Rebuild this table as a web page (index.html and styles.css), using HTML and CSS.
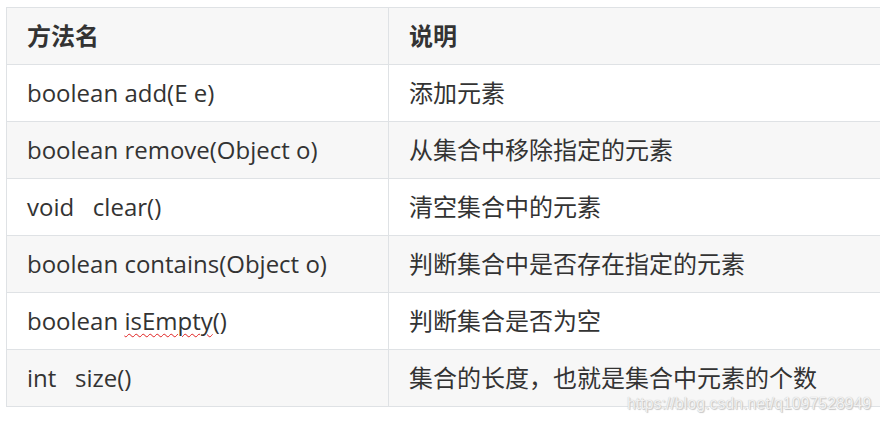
FILE: index.html
```html
<!DOCTYPE html>
<html lang="zh">
<head>
<meta charset="utf-8">
<link rel="stylesheet" href="styles.css">
</head>
<body>
<div class="page">
  <table class="methods">
    <thead>
      <tr><th class="col-name">方法名</th><th class="col-desc">说明</th></tr>
    </thead>
    <tbody>
      <tr><td>boolean add(E e)</td><td>添加元素</td></tr>
      <tr><td>boolean remove(Object o)</td><td>从集合中移除指定的元素</td></tr>
      <tr><td class="pre">void   clear()</td><td>清空集合中的元素</td></tr>
      <tr><td>boolean contains(Object o)</td><td>判断集合中是否存在指定的元素</td></tr>
      <tr><td>boolean <span class="spell">isEmpty</span>()</td><td>判断集合是否为空</td></tr>
      <tr><td class="pre">int   size()</td><td>集合的长度，也就是集合中元素的个数</td></tr>
    </tbody>
  </table>
  <div class="watermark">https://blog.csdn.net/q1097528949</div>
</div>
</body>
</html>
```
FILE: styles.css
```css
html, body {
  margin: 0;
  padding: 0;
  background: #ffffff;
  overflow: hidden;
}
.page {
  position: relative;
  width: 880px;
  height: 424px;
  padding: 7px 0 0 6px;
  box-sizing: border-box;
}
.methods {
  border-collapse: collapse;
  font-family: "Open Sans", "Noto Sans CJK SC", sans-serif;
  font-size: 24px;
  color: #333333;
  table-layout: fixed;
  width: 900px;
}
.methods th,
.methods td {
  border: 1px solid #dfe2e5;
  height: 57px;
  box-sizing: border-box;
  padding: 0 20px;
  text-align: left;
  vertical-align: middle;
  white-space: nowrap;
  line-height: 1;
}
.methods th {
  font-weight: 700;
  background: #f7f7f7;
}
.col-name { width: 382px; }
.methods tbody tr:nth-child(2n) { background: #f7f7f7; }
.pre { white-space: pre !important; }
.spell {
  text-decoration: underline wavy #e02020;
  text-decoration-thickness: 1px;
  text-underline-offset: 3px;
}
.watermark {
  position: absolute;
  left: 627px;
  top: 395px;
  font-family: "Liberation Sans", sans-serif;
  font-size: 15.6px;
  color: #f2f2f2;
  text-shadow: 0 0 1px #b8b8b8, 1px 1px 1px #c8c8c8;
  letter-spacing: 0.15px;
}
```
